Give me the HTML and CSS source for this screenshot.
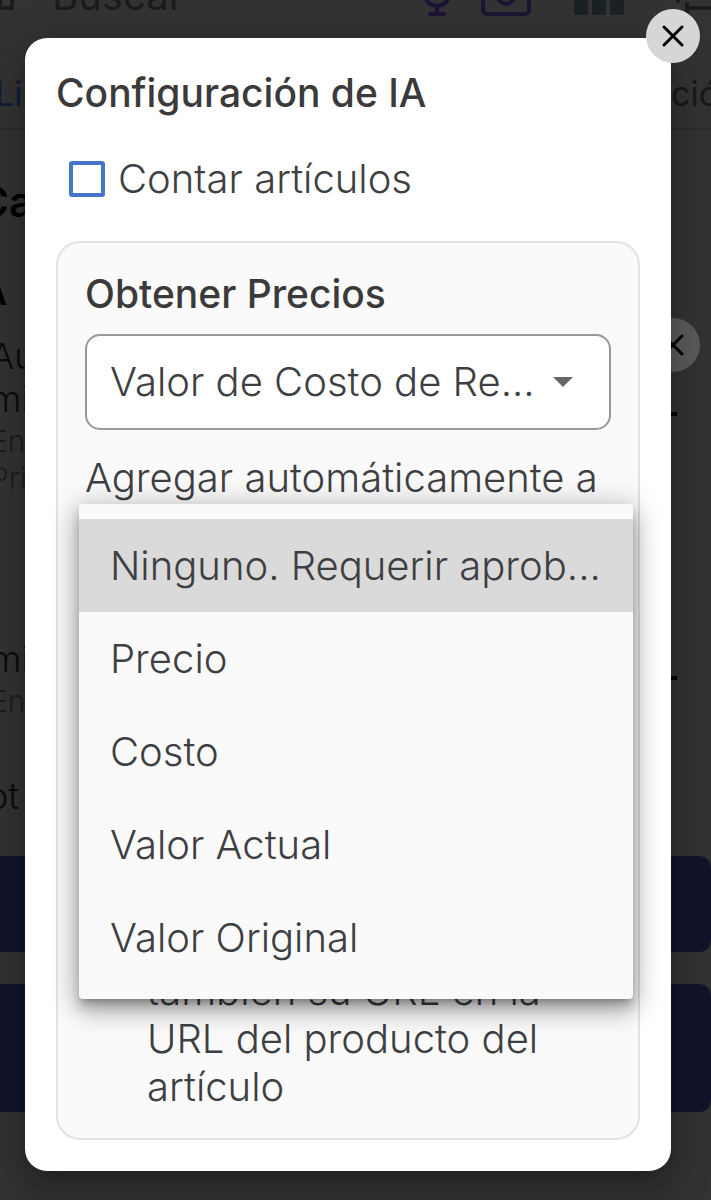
FILE: index.html
```html
<!DOCTYPE html>
<html lang="es">
<head>
<meta charset="utf-8">
<meta name="viewport" content="width=device-width, initial-scale=1">
<title>Configuración de IA</title>
<link rel="stylesheet" href="styles.css">
</head>
<body>
<div class="screen">
  <div class="page" aria-hidden="true">
    <header class="topbar">
      <svg class="scan" viewBox="0 0 14 24"><path d="M0 9V22M12 0V22M-4 9H12M-4 20H14" fill="none" stroke="currentColor" stroke-width="4"/></svg>
      <span class="search">Buscar</span>
      <svg class="mic" viewBox="0 0 28 40"><path d="M2 18a12 12 0 0 0 24 0M14 30v8M7 38h14" fill="none" stroke="currentColor" stroke-width="4" stroke-linecap="round"/><rect x="9" y="0" width="10" height="24" rx="5" fill="currentColor"/></svg>
      <svg class="camera" viewBox="0 0 50 40"><rect x="2" y="2" width="46" height="36" rx="4" fill="none" stroke="currentColor" stroke-width="4"/><circle cx="25" cy="20" r="8" fill="none" stroke="currentColor" stroke-width="4"/></svg>
      <svg class="columns" viewBox="0 0 50 40"><path d="M0 0h14v39H2q-2 0-2-2zM18 0h14v39H18zM36 0h14v37q0 2-2 2H36z" fill="currentColor"/></svg>
      <svg class="list" viewBox="0 0 38 40"><path d="M12 32h26M14 26v12M3 25h4" fill="none" stroke="currentColor" stroke-width="4"/></svg>
    </header>
    <nav class="tabs"><span class="tab-active">Li</span><span class="tab">ció</span></nav>
    <p class="heading">Ca</p>
    <p class="subheading">A</p>
    <div class="setting">
      <div><p class="name">Au<br>mi</p><p class="hint">En<br>Pri</p></div>
      <span class="dash"></span>
    </div>
    <div class="setting setting-second">
      <div><p class="name">mi</p><p class="hint">En</p></div>
      <span class="dash"></span>
    </div>
    <p class="notes">ot</p>
    <div class="action"></div>
    <div class="action action-tall"></div>
    <span class="round round-dim"><svg viewBox="0 0 54 54"><path d="M18 18 36 36M36 18 18 36"/></svg></span>
  </div>

  <main class="dialog" role="dialog" aria-labelledby="title">
    <button class="round round-close" type="button" aria-label="Cerrar"><svg viewBox="0 0 54 54"><path d="M18 18 36 36M36 18 18 36"/></svg></button>
    <h1 class="title" id="title">Configuración de IA</h1>
    <div class="check">
      <input class="box" type="checkbox" id="count">
      <label for="count">Contar artículos</label>
    </div>
    <section class="panel">
      <h2 class="panel-title"><label for="price">Obtener Precios</label></h2>
      <div class="picker">
        <select class="select" id="price"><option>Valor de Costo de Re...</option></select>
        <svg class="caret" viewBox="0 0 20 10"><path d="M0 0h20L10 10z" fill="#666"/></svg>
      </div>
      <p class="caption" id="auto">Agregar automáticamente a</p>
      <div class="menu" role="listbox" aria-labelledby="auto">
        <button class="item item-active" type="button" role="option" aria-selected="true">Ninguno. Requerir aprob...</button>
        <button class="item" type="button" role="option">Precio</button>
        <button class="item" type="button" role="option">Costo</button>
        <button class="item" type="button" role="option">Valor Actual</button>
        <button class="item" type="button" role="option">Valor Original</button>
      </div>
      <p class="note">también su URL en la URL del producto del artículo</p>
    </section>
  </main>
</div>
</body>
</html>
```
FILE: styles.css
```css
* { box-sizing: border-box; }
body, h1, h2, p { margin: 0; }
body {
  background: #333;
  color: #3e3f42;
  font: 300 40px/48px Inter, "Liberation Sans", sans-serif;
}
.screen {
  display: grid;
  grid-template-columns: minmax(0, 1fr);
  min-height: 100vh;
  overflow: hidden;
}
.page, .dialog { grid-area: 1 / 1; }

/* Dimmed page behind the dialog */
.page {
  position: relative;
  overflow: hidden;
  color: #0c0c0c;
}
.topbar {
  display: flex;
  align-items: flex-start;
  height: 54px;
  border-bottom: 1px solid #303030;
  color: #1b1b1b;
}
.topbar svg { flex: none; margin-top: -24px; height: 40px; }
.topbar .scan { width: 14px; height: 24px; margin-top: -12px; }
.search { margin: -28px auto 0 38px; font-weight: 400; }
.mic { width: 28px; margin-right: 30px; color: #1d1433; }
.camera { width: 50px; margin-right: 43px; color: #1d1433; }
.columns { width: 50px; margin-right: 49px; color: #1b2225; }
.list { width: 38px; }
.tabs {
  display: flex;
  justify-content: space-between;
  height: 76px;
  padding-top: 16px;
  border-bottom: 2px solid #2d2d2d;
  font-size: 34px;
  font-weight: 400;
}
.tab-active { margin-left: -5px; color: #111d3a; }
.tab { width: 40px; white-space: nowrap; color: #191919; }
.heading { margin: 48px 0 0 -22px; font-size: 42px; font-weight: 600; color: #000; }
.subheading { margin: 42px 0 0 -19px; font-size: 36px; font-weight: 600; color: #000; }
.setting {
  display: flex;
  justify-content: space-between;
  margin: 19px 34px 0 -10px;
}
.setting .dash { width: 8px; height: 4px; margin-top: 77px; background: #000; }
.setting-second { margin-top: 141px; }
.setting-second .dash { margin-top: 38px; }
.name { font-size: 36px; line-height: 43px; }
.hint { margin-top: 2px; font-size: 30px; line-height: 37px; color: #1d1d1d; }
.notes { margin: 52px 0 0 -13px; font-size: 36px; }
.action { height: 96px; margin: 36px 0 0 -20px; border-radius: 12px; background: #11142b; }
.action-tall { height: 128px; margin-top: 32px; }

.round {
  position: absolute;
  width: 54px;
  height: 54px;
  padding: 0;
  border: 0;
  border-radius: 50%;
}
.round svg { display: block; fill: none; stroke: #000; stroke-width: 3; stroke-linecap: round; }
.round-dim { top: 318px; right: 11px; background: #5b5b5b; }
.round-close { top: -29px; right: -29px; background: #d6d6d6; }

.dialog {
  position: relative;
  align-self: start;
  margin: 38px 40px 29px 25px;
  padding: 31px;
  border-radius: 22px;
  background: #fff;
  box-shadow: 0 11px 15px -7px rgba(0, 0, 0, .2), 0 24px 38px 3px rgba(0, 0, 0, .14), 0 9px 46px 8px rgba(0, 0, 0, .12);
}
.title, .panel-title { font-size: 39px; font-weight: 500; color: #3a3a3a; }
.check {
  display: flex;
  align-items: center;
  gap: 13px;
  margin: 38px 0 38px 13px;
}
.box {
  appearance: none;
  width: 36px;
  height: 36px;
  margin: 0;
  border: 4px solid #4775c7;
  border-radius: 3px;
}
.panel {
  padding: 27px;
  border: 2px solid #e2e2e2;
  border-radius: 24px;
  background: #fafafa;
}
.picker { display: grid; align-items: center; margin: 16px 0 24px; }
.select {
  grid-area: 1 / 1;
  appearance: none;
  width: 100%;
  height: 96px;
  padding: 0 64px 0 23px;
  border: 2px solid #999;
  border-radius: 15px;
  background: #fff;
  color: inherit;
  font: inherit;
}
.caret { grid-area: 1 / 1; justify-self: end; width: 20px; margin-right: 38px; pointer-events: none; }
.menu {
  position: relative;
  margin: 2px -22px 0 -6px;
  padding: 15px 0;
  border-radius: 4px;
  background: #fafafa;
  box-shadow: 0 5px 5px -3px rgba(0, 0, 0, .2), 0 8px 10px 1px rgba(0, 0, 0, .14), 0 3px 28px 4px rgba(0, 0, 0, .2), 0 14px 26px rgba(0, 0, 0, .18);
}
.item {
  display: block;
  width: 100%;
  height: 93px;
  padding: 0 31px;
  border: 0;
  background: none;
  color: inherit;
  font: inherit;
  text-align: left;
  white-space: nowrap;
}
.item-active { background: #dadada; }
.note { margin: -32px 60px 0 62px; }
```
